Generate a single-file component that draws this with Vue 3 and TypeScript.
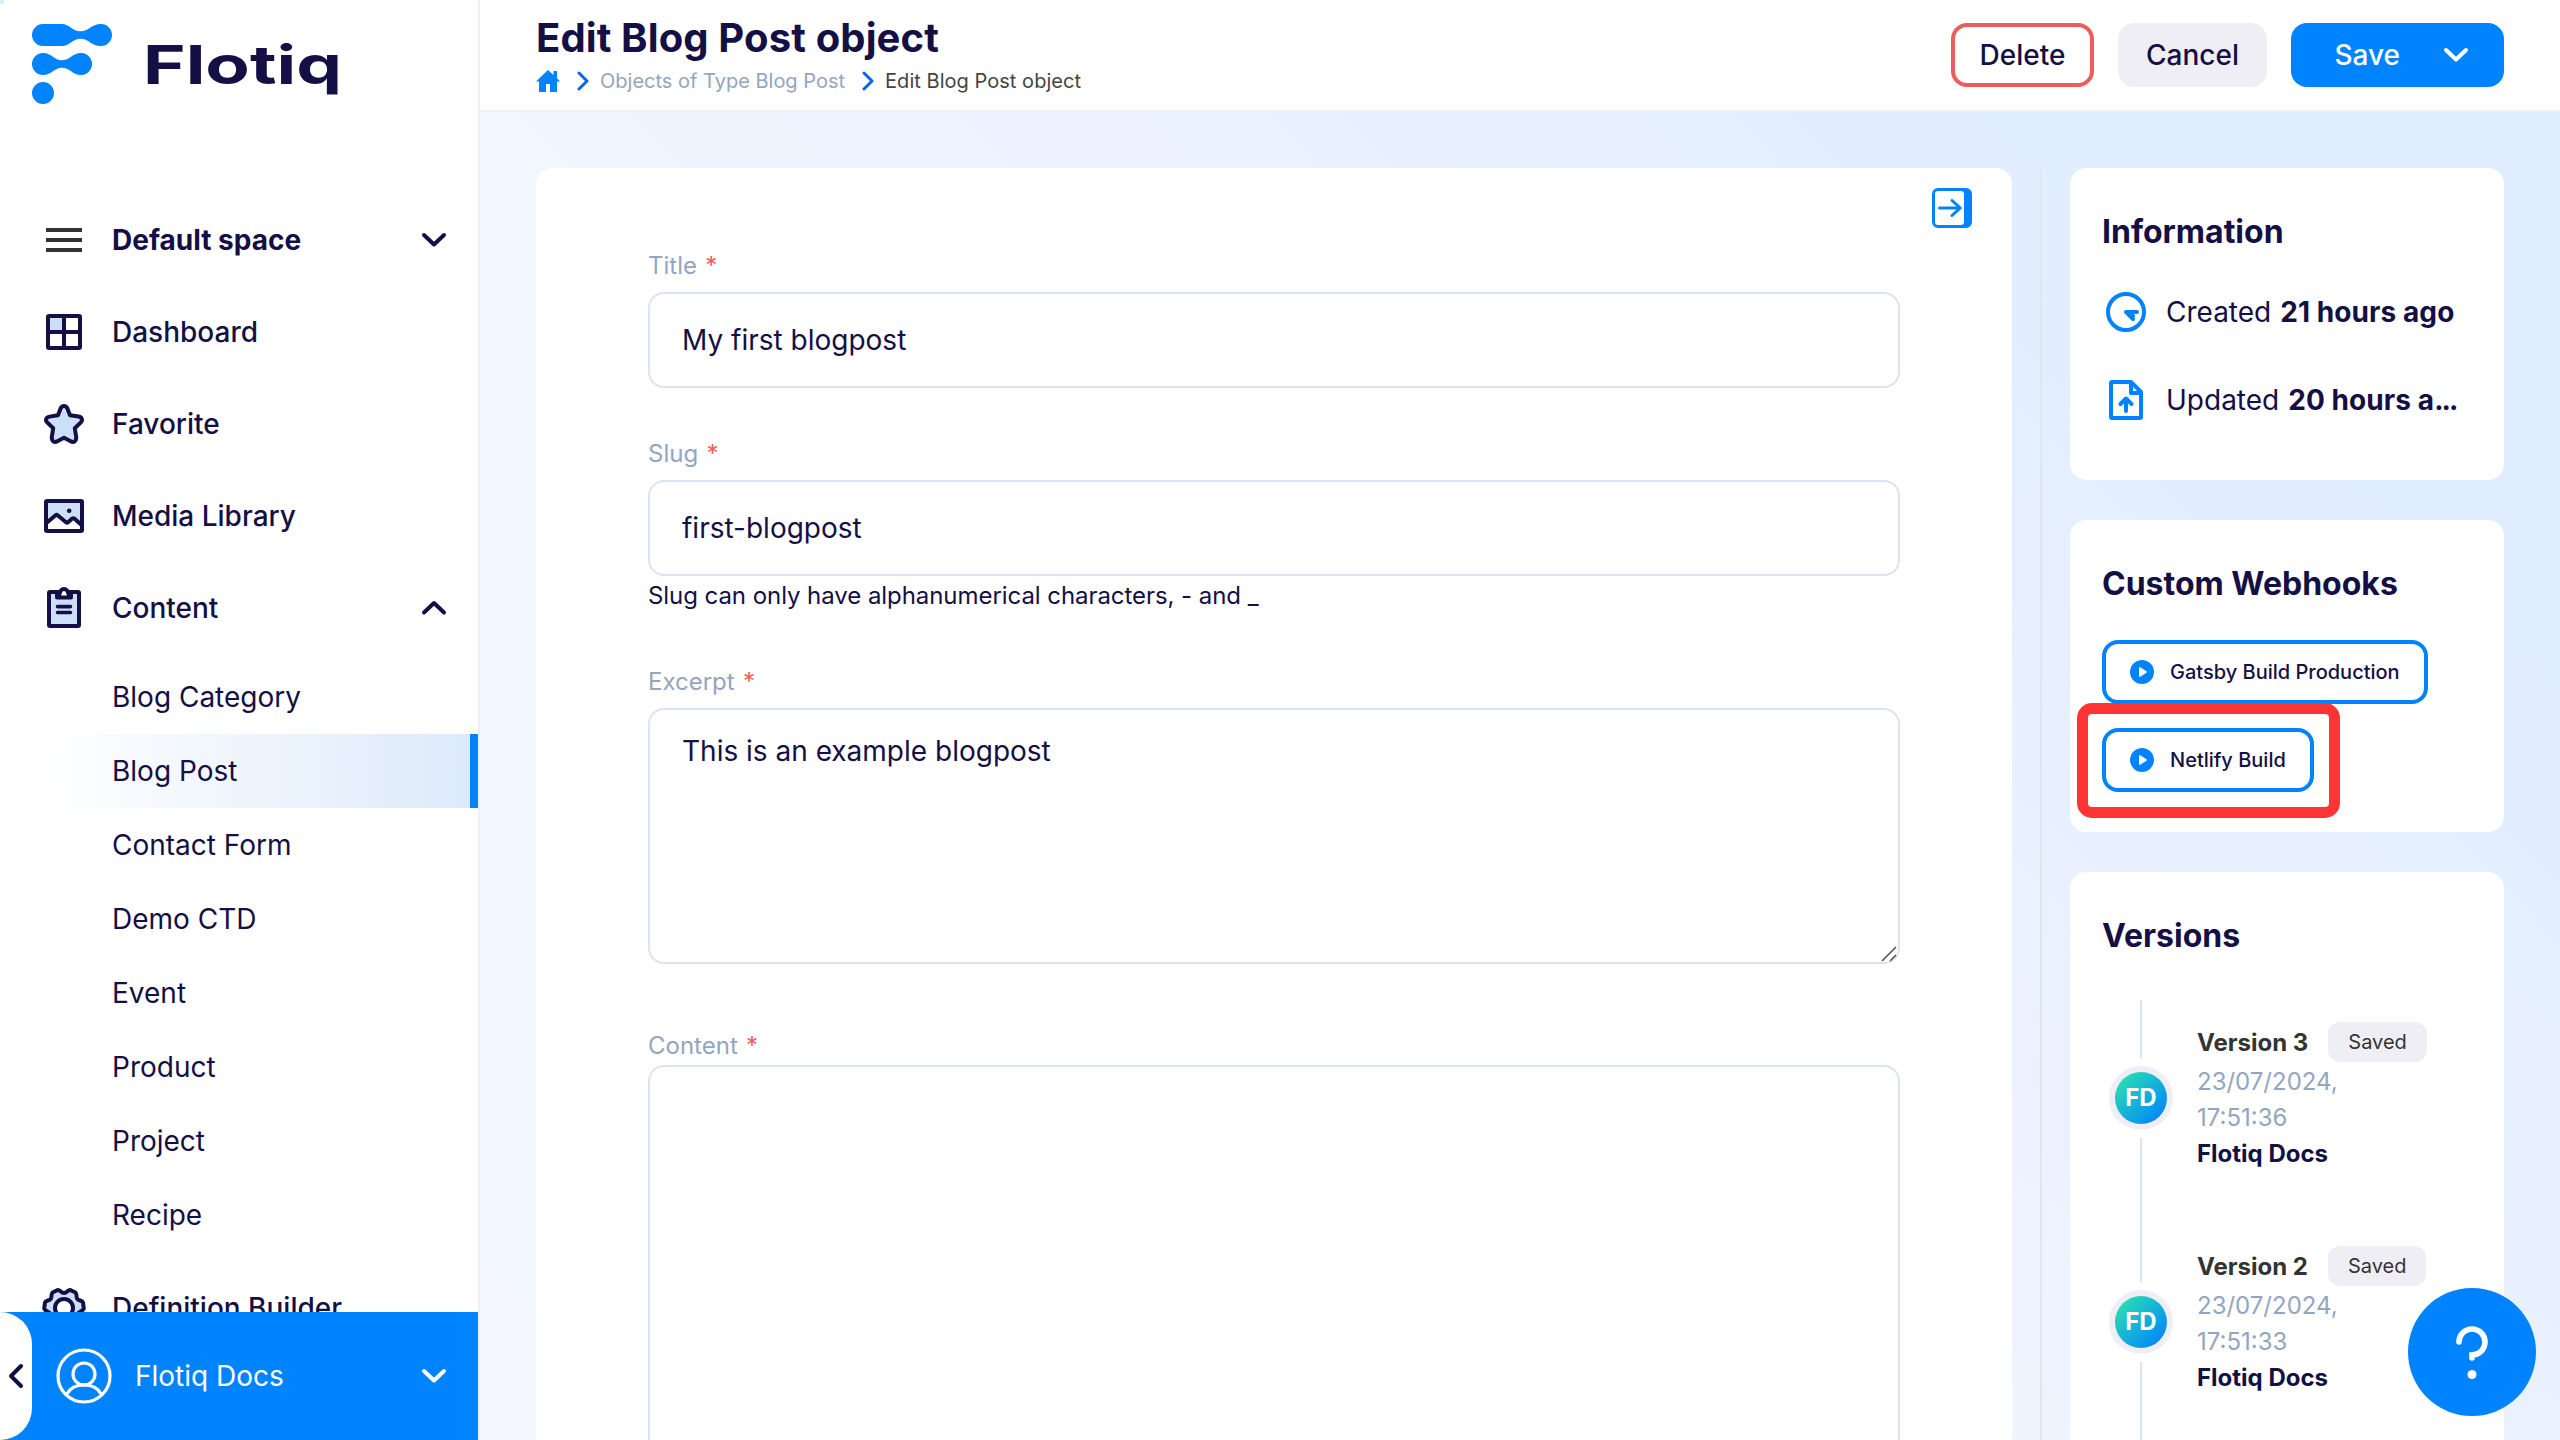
<script setup lang="ts">
interface NavItem {
  id: string
  label: string
}

interface Version {
  name: string
  date: string
  time: string
  author: string
}

const navItems: NavItem[] = [
  { id: 'dashboard', label: 'Dashboard' },
  { id: 'favorite', label: 'Favorite' },
  { id: 'media', label: 'Media Library' },
  { id: 'content', label: 'Content' },
]

const contentTypes: string[] = [
  'Blog Category',
  'Blog Post',
  'Contact Form',
  'Demo CTD',
  'Event',
  'Product',
  'Project',
  'Recipe',
]
const activeType = 'Blog Post'

const webhooks: string[] = ['Gatsby Build Production', 'Netlify Build']
const highlightedWebhook = 'Netlify Build'

const versions: Version[] = [
  { name: 'Version 3', date: '23/07/2024,', time: '17:51:36', author: 'Flotiq Docs' },
  { name: 'Version 2', date: '23/07/2024,', time: '17:51:33', author: 'Flotiq Docs' },
]
</script>

<template>
  <div class="app">
    <aside class="sidebar">
      <i class="corner"></i>
      <div class="logo">
        <svg class="logo-mark" viewBox="0 0 80 80" fill="#0083ff">
          <path d="M11 0H29.7C38 0 40 7.3 48.7 7.3C57 7.3 59 0 69 0A11 11 0 0 1 69 22C59 22 57 14.7 48.7 14.7C40 14.7 38 22 29.7 22H11A11 11 0 0 1 11 0Z" />
          <path d="M11 29C20 29 22 36.3 30 36.3C38 36.3 40 29 49 29A11 11 0 0 1 49 51C40 51 38 43.8 30 43.8C22 43.8 20 51 11 51A11 11 0 0 1 11 29Z" />
          <circle cx="11" cy="69" r="11" />
        </svg>
        <svg class="logo-text" width="200" height="80">
          <text x="-2" y="59.500" textLength="199" lengthAdjust="spacingAndGlyphs">Flotiq</text>
        </svg>
      </div>

      <nav class="nav">
        <div class="nav-row space">
          <svg class="nav-icon" viewBox="0 0 48 48" fill="#333">
            <path d="M6 12h36v4H6zM6 22h36v4H6zM6 32h36v4H6z" />
          </svg>
          <span>Default space</span>
          <svg class="chev" viewBox="0 0 28 20"><path d="M4 5l10 9.500L24 5" /></svg>
        </div>

        <div v-for="item in navItems" :key="item.id" class="nav-row">
          <svg v-if="item.id === 'dashboard'" class="nav-icon line" viewBox="0 0 48 48">
            <path d="M9 9h14v14H9z" fill="#cddef7" stroke="none" />
            <path d="M9 8h30a1 1 0 0 1 1 1v30a1 1 0 0 1-1 1H9a1 1 0 0 1-1-1V9a1 1 0 0 1 1-1zM24 8v32M8 24h32" />
          </svg>
          <svg v-else-if="item.id === 'favorite'" class="nav-icon line" viewBox="0 0 48 48">
            <path
              fill="#cddef7"
              d="M20.8 8C22.3 5.3 25.7 5.3 27.2 8L30 15.3L38.5 16.6C42.2 17.2 43 20.4 40.6 22.6L34.8 28.2L36.2 37C36.5 41 33.8 43 30.6 41.2L24 37.8L17.4 41.2C14.2 43 11.5 41 11.8 37L13.2 28.2L7.4 22.6C5 20.4 5.8 17.2 9.5 16.6L18 15.3Z"
            />
          </svg>
          <svg v-else-if="item.id === 'media'" class="nav-icon line" viewBox="0 0 48 48">
            <path d="M6 9h36v22l-8.500-7-6.500 6-10-9-11 9z" fill="#cddef7" stroke="none" />
            <path d="M7 9h34a1 1 0 0 1 1 1v28a1 1 0 0 1-1 1H7a1 1 0 0 1-1-1V10a1 1 0 0 1 1-1z" />
            <path d="M7 30.500l8.600-7.300Q16.600 22.300 17.600 23.200L26 30.300Q27 31 28 30.300L32.300 26.600Q33.300 25.800 34.300 26.600L41.500 33" />
            <circle cx="29.200" cy="18.700" r="2.300" fill="#140f44" stroke="none" />
          </svg>
          <svg v-else class="nav-icon line" viewBox="0 0 48 48">
            <path d="M10 8h28a1 1 0 0 1 1 1v32a1 1 0 0 1-1 1H10a1 1 0 0 1-1-1V9a1 1 0 0 1 1-1z" fill="#cddef7" />
            <path d="M17 13.500V10h2.500C20.200 6.800 22 5 24 5S27.800 6.800 28.500 10H31v3.500z" fill="#fff" />
            <path d="M17.500 22.600h13M17.500 28.500h13" stroke-width="3.600" />
          </svg>
          <span>{{ item.label }}</span>
          <svg v-if="item.id === 'content'" class="chev" viewBox="0 0 28 20"><path d="M4 14.500l10-9.500L24 14.500" /></svg>
        </div>

        <ul class="types">
          <li v-for="type in contentTypes" :key="type" :class="{ active: type === activeType }">{{ type }}</li>
        </ul>

        <div class="nav-row">
          <svg class="nav-icon line" viewBox="0 0 48 48">
            <path
              fill="#cddef7"
              d="M24 9C27 9 27.500 5.800 30.300 6L35.500 8.500C37.300 10.500 36 13.500 37.300 15C39 17 42 16 43 18.500L43.800 24.500C43 27.500 39.500 27 38 29.500C36.500 32 38.500 35 36.500 37L31 41C28 42 27 39 24 39S20 42 17 41L11.500 37C9.500 35 11.500 32 10 29.500C8.500 27 5 27.500 4.200 24.500L5 18.500C6 16 9 17 10.700 15C12 13.500 10.700 10.500 12.500 8.500L17.700 6C20.500 5.800 21 9 24 9Z"
            />
            <circle cx="24" cy="24" r="9" fill="#fff" />
          </svg>
          <span>Definition Builder</span>
        </div>
      </nav>

      <footer class="user">
        <div class="collapse">
          <svg viewBox="0 0 32 32"><path d="M21 6l-10 10L21 26" /></svg>
        </div>
        <svg class="user-icon" viewBox="0 0 56 56">
          <circle cx="28" cy="28" r="26" />
          <circle cx="28" cy="26" r="11" />
          <path d="M10.500 46.500C13.500 40.500 20 36.800 28 36.800S42.500 40.500 45.500 46.500" />
        </svg>
        <span>Flotiq Docs</span>
        <svg class="chev" viewBox="0 0 28 20"><path d="M4 5l10 9.500L24 5" /></svg>
      </footer>
    </aside>

    <div class="page">
      <header class="header">
        <div class="heading">
          <h1>Edit Blog Post object</h1>
          <div class="crumbs">
            <svg class="home" viewBox="0 0 24 22" fill="#0083ff">
              <path d="M12 0l5.500 5V1H21v7l3 3.500h-3V22H14v-8h-4v8H3V11.500H0z" />
            </svg>
            <svg class="sep" viewBox="0 0 12 20"><path d="M2 2l8 8-8 8" /></svg>
            <span class="link">Objects of Type Blog Post</span>
            <svg class="sep" viewBox="0 0 12 20"><path d="M2 2l8 8-8 8" /></svg>
            <span class="current">Edit Blog Post object</span>
          </div>
        </div>
        <div class="actions">
          <button class="btn delete">Delete</button>
          <button class="btn cancel">Cancel</button>
          <button class="btn save">
            Save
            <svg class="chev" viewBox="0 0 28 20"><path d="M4 5l10 9.500L24 5" /></svg>
          </button>
        </div>
      </header>

      <main class="body">
        <section class="form">
          <svg class="panel-toggle" viewBox="0 0 40 40">
            <path fill="#0083ff" fill-rule="evenodd" d="M6 0H34A6 6 0 0 1 40 6V34A6 6 0 0 1 34 40H6A6 6 0 0 1 0 34V6A6 6 0 0 1 6 0ZM6 3A3 3 0 0 0 3 6V34A3 3 0 0 0 6 37H29A3 3 0 0 0 32 34V6A3 3 0 0 0 29 3Z" />
            <path d="M7.500 20H28M20 12.500l8.300 7.500-8.300 7.500" fill="none" stroke="#0083ff" stroke-width="3" stroke-linecap="round" stroke-linejoin="round" />
          </svg>

          <label>Title <b>*</b></label>
          <div class="input">My first blogpost</div>

          <label class="slug-label">Slug <b>*</b></label>
          <div class="input">first-blogpost</div>
          <p class="hint">Slug can only have alphanumerical characters, - and _</p>

          <label class="excerpt-label">Excerpt <b>*</b></label>
          <div class="area">
            This is an example blogpost
            <svg class="grip" viewBox="0 0 16 16"><path d="M1 15L15 1M9 15l6-6" /></svg>
          </div>

          <label class="content-label">Content <b>*</b></label>
          <div class="editor"></div>
        </section>

        <aside class="side">
          <section class="card info">
            <h2>Information</h2>
            <div class="info-row">
              <svg viewBox="0 0 40 40">
                <circle cx="20" cy="20" r="18" />
                <path d="M20 20H31M20 20l7 7M22 21l5 3" stroke-linecap="round" />
              </svg>
              <p><span>Created</span><b>21 hours ago</b></p>
            </div>
            <div class="info-row">
              <svg viewBox="0 0 40 40">
                <path d="M6 2H25L35 12V37a1 1 0 0 1-1 1H6a1 1 0 0 1-1-1V3a1 1 0 0 1 1-1zM25 2V13H35" />
                <path d="M20 31V19.500M14.500 24l5.500-5.500 5.500 5.500" stroke-linecap="round" />
              </svg>
              <p><span>Updated</span><b>20 hours a<span class="dots">...</span></b></p>
            </div>
          </section>

          <section class="card hooks">
            <h2>Custom Webhooks</h2>
            <div v-for="hook in webhooks" :key="hook" class="hook-row">
              <button class="hook">
                <svg viewBox="0 0 24 24">
                  <circle cx="12" cy="12" r="12" fill="#0083ff" />
                  <path d="M9.800 8v8l6.200-4z" fill="#fff" stroke="#fff" stroke-width="1.600" stroke-linejoin="round" />
                </svg>
                {{ hook }}
                <i v-if="hook === highlightedWebhook" class="marker"></i>
              </button>
            </div>
          </section>

          <section class="card versions">
            <h2>Versions</h2>
            <div v-for="v in versions" :key="v.name" class="version">
              <div class="rail">
                <i class="line-top"></i>
                <div class="avatar"><span>FD</span></div>
                <i class="line-bottom"></i>
              </div>
              <div class="meta">
                <div class="meta-head"><b>{{ v.name }}</b><span class="badge">Saved</span></div>
                <p class="when">{{ v.date }}<br />{{ v.time }}</p>
                <p class="author">{{ v.author }}</p>
              </div>
            </div>
          </section>
        </aside>
      </main>
    </div>

    <button class="help">
      <svg viewBox="0 0 40 60">
        <path d="M7 20A13 13 0 1 1 20 33V36" />
        <circle cx="20" cy="52.500" r="4.500" />
      </svg>
    </button>
  </div>
</template>

<style>
body {
  margin: 0;
  overflow: hidden;
}
</style>

<style scoped>
* {
  box-sizing: border-box;
}

.app {
  position: relative;
  display: flex;
  width: 2560px;
  height: 1440px;
  overflow: hidden;
  font-family: Inter, 'Liberation Sans', sans-serif;
  font-optical-sizing: none;
  font-size: 28px;
  line-height: 34px;
  color: #140f44;
  background: #fff;
}

h1,
h2,
p,
ul {
  margin: 0;
  padding: 0;
}

button {
  font: inherit;
  color: inherit;
  margin: 0;
}

svg {
  display: block;
  flex: none;
}

/* Sidebar */
.sidebar {
  position: relative;
  display: flex;
  flex-direction: column;
  flex: none;
  width: 480px;
  height: 1440px;
  border-right: 2px solid #efeef5;
  background: #fff;
}

.corner {
  position: absolute;
  left: 0;
  top: 0;
  width: 4px;
  height: 4px;
  background: #d2effa;
}

.logo {
  display: flex;
  flex: none;
  height: 194px;
  padding: 24px 0 0 32px;
}

.logo-mark {
  width: 80px;
  height: 80px;
}

.logo-text {
  margin-left: 33px;
  overflow: visible;
  font-size: 54px;
  font-weight: 650;
  fill: #140f44;
}

.nav {
  flex: 1;
  min-height: 0;
  overflow: hidden;
}

.nav-row {
  display: flex;
  align-items: center;
  height: 92px;
  padding: 0 30px 0 40px;
  font-weight: 500;
}

.nav-row.space {
  font-weight: 700;
}

.nav-icon {
  width: 48px;
  height: 48px;
  margin-right: 24px;
}

.line {
  fill: none;
  stroke: #140f44;
  stroke-width: 4;
  stroke-linejoin: round;
  stroke-linecap: round;
}

.chev {
  width: 28px;
  height: 20px;
  margin-left: auto;
  fill: none;
  stroke: currentColor;
  stroke-width: 4;
  stroke-linecap: round;
  stroke-linejoin: round;
}

.types {
  padding: 6px 0 10px;
  list-style: none;
}

.types li {
  display: flex;
  align-items: center;
  height: 74px;
  padding-left: 112px;
}

.types li.active {
  border-right: 8px solid #0083ff;
  background: linear-gradient(90deg, #fff 40px, #ddeafa 100%);
}

.user {
  display: flex;
  align-items: center;
  flex: none;
  height: 128px;
  padding-right: 30px;
  color: #fff;
  background: #0083ff;
}

.collapse {
  display: flex;
  align-items: center;
  width: 32px;
  height: 128px;
  border-radius: 0 32px 32px 0;
  background: #fff;
}

.collapse svg {
  width: 32px;
  height: 32px;
  fill: none;
  stroke: #140f44;
  stroke-width: 4;
  stroke-linecap: round;
  stroke-linejoin: round;
}

.user-icon {
  width: 56px;
  height: 56px;
  margin: 0 23px 0 24px;
  fill: none;
  stroke: #fff;
  stroke-width: 3.2;
}

/* Header */
.page {
  display: flex;
  flex-direction: column;
  flex: 1;
  min-width: 0;
}

.header {
  display: flex;
  justify-content: space-between;
  flex: none;
  height: 112px;
  padding: 14px 56px 0;
  border-bottom: 2px solid #efeef5;
  background: #fff;
}

h1 {
  font-size: 40px;
  line-height: 48px;
  font-weight: 700;
  letter-spacing: 0.13px;
}

.crumbs {
  display: flex;
  align-items: center;
  height: 24px;
  margin-top: 7px;
  font-size: 20px;
  line-height: 24px;
}

.home {
  width: 24px;
  height: 22px;
}

.sep {
  width: 12px;
  height: 20px;
  margin: 0 11px 0 17px;
  fill: none;
  stroke: #0566e8;
  stroke-width: 3;
  stroke-linecap: round;
  stroke-linejoin: round;
}

.link {
  color: #93a5bf;
}

.current {
  color: #444;
  letter-spacing: 0.04px;
}

.actions {
  display: flex;
  gap: 24px;
  margin-top: 9px;
}

.btn {
  display: flex;
  align-items: center;
  justify-content: center;
  height: 64px;
  padding: 0;
  border: 0;
  border-radius: 16px;
  font-weight: 500;
}

.delete {
  width: 143px;
  border: 4px solid #f05b5b;
  background: #fff;
}

.cancel {
  width: 149px;
  background: #efeef5;
}

.save {
  justify-content: flex-start;
  width: 213px;
  padding: 0 34px 0 43.5px;
  color: #fff;
  background: #0083ff;
}

/* Content */
.body {
  display: flex;
  flex: 1;
  min-height: 0;
  padding: 56px 56px 0;
  overflow: hidden;
  background: linear-gradient(45deg, #f4f7ff 0%, #f3f7ff 30%, #f0f5ff 42%, #eaf1ff 60%, #e2eeff 78%, #dfedff 100%);
}

.form {
  position: relative;
  display: flex;
  flex-direction: column;
  flex: none;
  width: 1476px;
  padding: 83px 112px 0;
  border-radius: 16px 16px 0 0;
  background: #fff;
}

.panel-toggle {
  position: absolute;
  right: 40px;
  top: 20px;
  width: 40px;
  height: 40px;
}

label {
  font-size: 24px;
  line-height: 29px;
  margin-bottom: 12px;
  color: #93a5bf;
}

label b {
  margin-left: 1.5px;
  font-weight: 400;
  color: #f05b5b;
}

.slug-label {
  margin-top: 51px;
}

.excerpt-label {
  margin-top: 57px;
}

.content-label {
  margin-top: 67px;
  margin-bottom: 5px;
}

.input,
.area,
.editor {
  border: 2px solid #dae4f3;
  border-radius: 16px;
}

.input {
  display: flex;
  align-items: center;
  height: 96px;
  padding-left: 32px;
}

.hint {
  margin-top: 5px;
  font-size: 24px;
  line-height: 29px;
  letter-spacing: -0.06px;
}

.area {
  position: relative;
  height: 256px;
  padding: 24px 32px;
}

.grip {
  position: absolute;
  right: 1px;
  bottom: 0;
  width: 16px;
  height: 16px;
  fill: none;
  stroke: #555;
  stroke-width: 1.6;
}

.editor {
  flex: 1;
  border-bottom: 0;
  border-radius: 16px 16px 0 0;
}

.side {
  display: flex;
  flex-direction: column;
  gap: 40px;
  margin-left: 28px;
  padding-left: 28px;
  width: 464px;
  border-left: 2px solid #e2e5eb;
}

.card {
  flex: none;
  padding: 44px 32px 0;
  border-radius: 16px;
  background: #fff;
}

h2 {
  font-size: 32px;
  line-height: 39px;
  font-weight: 700;
}

.info {
  height: 312px;
}

.info h2 {
  margin-bottom: 41px;
}

.info-row {
  display: flex;
  align-items: center;
  height: 40px;
  margin-bottom: 48px;
  padding-left: 4px;
}

.info-row svg {
  width: 40px;
  height: 40px;
  margin-right: 20px;
  fill: none;
  stroke: #0083ff;
  stroke-width: 4;
  stroke-linejoin: round;
}

.info-row p {
  display: flex;
  gap: 9px;
  white-space: nowrap;
}

.info-row b {
  letter-spacing: 0.08px;
}

.dots {
  letter-spacing: -2px;
}

.info-row b,
.author {
  font-weight: 700;
}

.hooks {
  height: 312px;
}

.hooks h2 {
  margin-bottom: 37px;
}

.hook-row {
  display: flex;
  margin-bottom: 24px;
}

.hook {
  position: relative;
  display: flex;
  align-items: center;
  gap: 16px;
  height: 64px;
  padding: 0 24px;
  border: 4px solid #0083ff;
  border-radius: 16px;
  font-size: 20px;
  font-weight: 500;
  white-space: nowrap;
  background: #fff;
}

.hook svg {
  width: 24px;
  height: 24px;
}

.marker {
  position: absolute;
  left: -29px;
  top: -29px;
  width: 263px;
  height: 115px;
  border: 11px solid #ff3535;
  border-radius: 15px;
}

.versions {
  height: 700px;
}

.versions h2 {
  margin-bottom: 45px;
}

.version {
  display: flex;
  height: 224px;
}

.rail {
  display: flex;
  flex-direction: column;
  align-items: center;
  width: 64px;
  margin: 0 24px 0 7px;
}

.rail i {
  width: 2px;
  background: #dae4f3;
}

.line-top {
  height: 58px;
}

.line-bottom {
  flex: 1;
}

.avatar {
  display: flex;
  flex: none;
  width: 64px;
  height: 64px;
  margin: 8px 0;
  padding: 6px;
  border-radius: 50%;
  background: #efeef5;
}

.avatar span {
  width: 52px;
  border-radius: 50%;
  font-size: 24px;
  font-weight: 700;
  line-height: 52px;
  text-align: center;
  color: #fff;
  background: linear-gradient(135deg, #2ae5ae 5%, #0083ff 92%);
}

.meta {
  padding-top: 22px;
  font-size: 24px;
  line-height: 36px;
}

.meta-head {
  display: flex;
  align-items: center;
  height: 40px;
  color: #333;
}

.meta-head b {
  margin-top: 2px;
}

.badge {
  height: 40px;
  margin-left: 20px;
  padding: 0 20px;
  border-radius: 12px;
  font-size: 20px;
  line-height: 40px;
  background: #efeef5;
}

.when {
  color: #93a5bf;
  margin-top: 2px;
}

.help {
  position: absolute;
  right: 24px;
  bottom: 24px;
  display: flex;
  justify-content: center;
  width: 128px;
  height: 128px;
  padding: 34px 0 0;
  border: 0;
  border-radius: 50%;
  background: #0083ff;
}

.help svg {
  width: 40px;
  height: 60px;
  fill: none;
  stroke: #fff;
  stroke-width: 5.6;
  stroke-linecap: round;
}

.help circle {
  fill: #fff;
  stroke: none;
}
</style>
